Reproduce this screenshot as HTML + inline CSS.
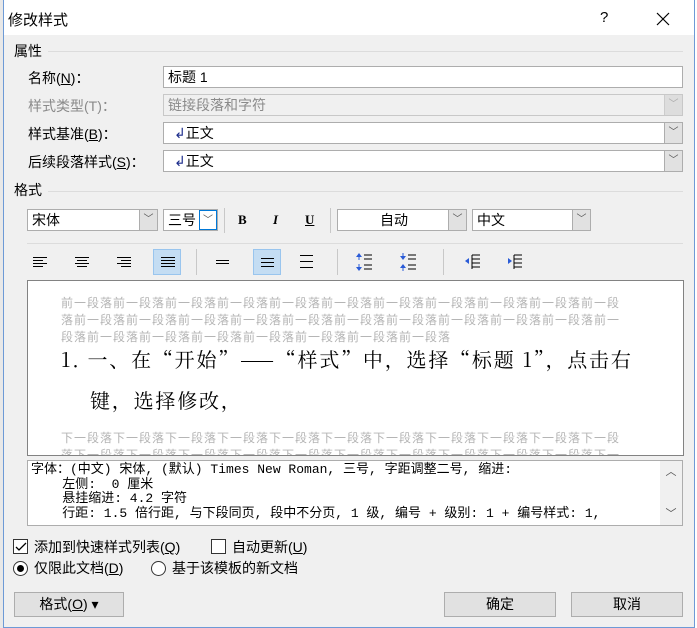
<!DOCTYPE html>
<html><head><meta charset="utf-8"><style>
*{margin:0;padding:0;box-sizing:border-box}
body{width:697px;height:628px;overflow:hidden;background:#fff;font-family:"Liberation Sans","Noto Sans CJK SC",sans-serif;font-size:13px;color:#000;position:relative}
.a{position:absolute}
.dlg{left:3px;top:0;width:692px;height:628px;background:#f0f0f0;border:1px solid #6d9ad6;border-top:none}
.tb{left:4px;top:0;width:690px;height:35px;background:#fff}
.fld{background:#fff;border:1px solid #adadad;height:22px;line-height:20px;padding-left:4px;font-size:14px}
.dd{position:absolute;right:0;top:0;width:18px;height:20px;background:#e1e1e1;border-left:1px solid #adadad;color:#555;font-size:10px;text-align:center;line-height:20px}
.lbl{font-size:14px;line-height:20px}
.gl{height:1px;background:#dcdcdc}
.ic{width:28px;height:26px;top:249px}
.hl{background:#c4ddf3;border:1px solid #99c5ee}
.ln{position:absolute;left:7px;height:1px;background:#000}
.sep{width:1px;background:#c8c8c8}
.grey{font-size:12px;color:#b4b4b4;letter-spacing:1px;line-height:17px;font-family:"Noto Sans CJK SC",sans-serif}
.btn{background:#e1e1e1;border:1px solid #adadad;height:25px;text-align:center;line-height:23px;font-size:14px}
.mono{font-family:"Liberation Mono","Noto Sans CJK SC",monospace;font-size:13px;line-height:14.5px;white-space:pre}
.hd{font-family:"Noto Serif CJK SC",serif;font-size:20px;line-height:28px;white-space:nowrap;letter-spacing:1.8px}
</style></head><body>
<div class="a" style="left:0;top:0;width:3px;height:628px;background:#e8e8e8"></div>
<div class="a dlg"></div>
<div class="a tb"></div>
<div class="a" style="left:8px;top:9px;font-size:15px">修改样式</div>
<div class="a" style="left:600px;top:9px;font-size:15px">?</div>
<svg class="a" style="left:656px;top:12px" width="14" height="14"><path d="M1 1L13 13M13 1L1 13" stroke="#000" stroke-width="1.2"/></svg>

<div class="a lbl" style="left:14px;top:41px">属性</div>
<div class="a gl" style="left:48px;top:51px;width:635px"></div>
<div class="a lbl" style="left:28px;top:68px">名称(<u>N</u>)：</div>
<div class="a fld" style="left:163px;top:66px;width:520px">标题 1</div>
<div class="a lbl" style="left:28px;top:96px;color:#8a8a8a">样式类型(T)：</div>
<div class="a fld" style="left:163px;top:94px;width:520px;background:#f0f0f0;border-color:#c8c8c8;color:#8a8a8a">链接段落和字符<div class="dd" style="background:#ddd;border-color:#ccc;color:#aaa">﹀</div></div>
<div class="a lbl" style="left:28px;top:124px">样式基准(<u>B</u>)：</div>
<div class="a fld" style="left:163px;top:122px;width:520px;padding-left:10px"><span style="color:#1a2a8a">↲</span>正文<div class="dd">﹀</div></div>
<div class="a lbl" style="left:28px;top:152px">后续段落样式(<u>S</u>)：</div>
<div class="a fld" style="left:163px;top:150px;width:520px;padding-left:10px"><span style="color:#1a2a8a">↲</span>正文<div class="dd">﹀</div></div>

<div class="a lbl" style="left:14px;top:180px">格式</div>
<div class="a gl" style="left:48px;top:191px;width:635px"></div>

<div class="a fld" style="left:27px;top:209px;width:131px">宋体<div class="dd">﹀</div></div>
<div class="a fld" style="left:163px;top:209px;width:55px">三号<div class="dd" style="background:#fff;border:1px solid #0078d7">﹀</div></div>
<div class="a sep" style="left:224px;top:208px;height:25px"></div>
<div class="a" style="left:238px;top:212px;font-family:'Liberation Serif',serif;font-weight:bold;font-size:13px">B</div>
<div class="a" style="left:273px;top:212px;font-family:'Liberation Serif',serif;font-style:italic;font-weight:bold;font-size:13px">I</div>
<div class="a" style="left:305px;top:212px;font-family:'Liberation Serif',serif;text-decoration:underline;font-weight:bold;font-size:13px">U</div>
<div class="a sep" style="left:330px;top:208px;height:25px"></div>
<div class="a fld" style="left:337px;top:209px;width:130px;text-align:center;padding-right:20px">自动<div class="dd">﹀</div></div>
<div class="a fld" style="left:472px;top:209px;width:119px">中文<div class="dd">﹀</div></div>
<div class="a gl" style="left:27px;top:243px;width:656px"></div>

<div class="a ic" style="left:26px"><div class="ln" style="top:8px;width:14px"></div><div class="ln" style="top:11px;width:10px"></div><div class="ln" style="top:14px;width:14px"></div><div class="ln" style="top:17px;width:10px"></div></div>
<div class="a ic" style="left:68px"><div class="ln" style="top:8px;width:14px"></div><div class="ln" style="top:11px;left:9px;width:10px"></div><div class="ln" style="top:14px;width:14px"></div><div class="ln" style="top:17px;left:9px;width:10px"></div></div>
<div class="a ic" style="left:110px"><div class="ln" style="top:8px;width:14px"></div><div class="ln" style="top:11px;left:11px;width:10px"></div><div class="ln" style="top:14px;width:14px"></div><div class="ln" style="top:17px;left:11px;width:10px"></div></div>
<div class="a ic hl" style="left:153px"><div class="ln" style="top:7px;width:14px"></div><div class="ln" style="top:10px;width:14px"></div><div class="ln" style="top:13px;width:14px"></div><div class="ln" style="top:16px;width:14px"></div></div>
<div class="a sep" style="left:196px;top:249px;height:26px"></div>
<div class="a ic" style="left:209px"><div class="ln" style="top:11px;width:13px"></div><div class="ln" style="top:14px;width:13px"></div></div>
<div class="a ic hl" style="left:253px"><div class="ln" style="top:8px;width:13px"></div><div class="ln" style="top:12px;width:13px"></div><div class="ln" style="top:16px;width:13px"></div></div>
<div class="a ic" style="left:293px"><div class="ln" style="top:6px;width:13px"></div><div class="ln" style="top:12px;width:13px"></div><div class="ln" style="top:18px;width:13px"></div></div>
<div class="a sep" style="left:337px;top:249px;height:26px"></div>
<svg class="a" style="left:355px;top:252px" width="18" height="20"><path d="M4 1L1 5h6z M4 19L1 15h6z" fill="#2a5bd7"/><path d="M4 5v3M4 12v3" stroke="#2a5bd7"/><path d="M9 3h8M9 7h8M9 13h8M9 17h8" stroke="#000"/></svg>
<svg class="a" style="left:399px;top:252px" width="18" height="20"><path d="M4 8L1 4h6z M4 12L1 16h6z" fill="#2a5bd7"/><path d="M4 1v3M4 16v3" stroke="#2a5bd7"/><path d="M9 3h8M9 7h8M9 13h8M9 17h8" stroke="#000"/></svg>
<div class="a sep" style="left:443px;top:249px;height:26px"></div>
<svg class="a" style="left:464px;top:253px" width="18" height="18"><path d="M1 8l4-3v6z" fill="#2a5bd7"/><path d="M8 2h8M8 6h8M8 10h8M8 14h8M8 2v14" stroke="#000"/></svg>
<svg class="a" style="left:506px;top:253px" width="18" height="18"><path d="M6 8l-4-3v6z" fill="#2a5bd7"/><path d="M8 2h8M8 6h8M8 10h8M8 14h8M8 2v14" stroke="#000"/></svg>

<div class="a" style="left:27px;top:280px;width:657px;height:176px;background:#fff;border:1px solid #828282;overflow:hidden">
<div class="a grey" style="left:33px;top:13px;width:570px">前一段落前一段落前一段落前一段落前一段落前一段落前一段落前一段落前一段落前一段落前一段落前一段落前一段落前一段落前一段落前一段落前一段落前一段落前一段落前一段落前一段落前一段落前一段落前一段落前一段落前一段落前一段落前一段落前一段落</div>
<div class="a hd" style="left:33px;top:64px">1. 一、在“开始”——“样式”中，选择“标题 1”，点击右</div>
<div class="a hd" style="left:62px;top:105px">键，选择修改，</div>
<div class="a grey" style="left:33px;top:148px;width:570px">下一段落下一段落下一段落下一段落下一段落下一段落下一段落下一段落下一段落下一段落下一段落下一段落下一段落下一段落下一段落下一段落下一段落下一段落下一段落下一段落下一段落下一段落</div>
</div>

<div class="a" style="left:27px;top:460px;width:656px;height:66px;background:#fff;border:1px solid #adadad;overflow:hidden">
<div class="a mono" style="left:3px;top:2px">字体：(中文) 宋体, (默认) Times New Roman, 三号, 字距调整二号, 缩进:
    左侧:  0 厘米
    悬挂缩进: 4.2 字符
    行距: 1.5 倍行距, 与下段同页, 段中不分页, 1 级, 编号 + 级别: 1 + 编号样式: 1,</div>
<div class="a" style="right:0;top:0;width:22px;height:64px;background:#f0f0f0;color:#555;font-size:11px;text-align:center;line-height:14px;padding-top:4px">︿<br><br><br>﹀</div>
</div>

<div class="a" style="left:13px;top:539px;width:15px;height:15px;border:1px solid #333;background:#fff"></div>
<svg class="a" style="left:15px;top:541px" width="12" height="12"><path d="M1 6l3 3 7-7" stroke="#000" fill="none" stroke-width="1.3"/></svg>
<div class="a lbl" style="left:34px;top:537px">添加到快速样式列表(<u>Q</u>)</div>
<div class="a" style="left:211px;top:539px;width:15px;height:15px;border:1px solid #333;background:#fff"></div>
<div class="a lbl" style="left:232px;top:537px">自动更新(<u>U</u>)</div>
<div class="a" style="left:13px;top:561px;width:15px;height:15px;border:1px solid #333;border-radius:50%;background:#fff"></div>
<div class="a" style="left:17px;top:565px;width:7px;height:7px;border-radius:50%;background:#000"></div>
<div class="a lbl" style="left:34px;top:558px">仅限此文档(<u>D</u>)</div>
<div class="a" style="left:151px;top:561px;width:15px;height:15px;border:1px solid #333;border-radius:50%;background:#fff"></div>
<div class="a lbl" style="left:172px;top:558px">基于该模板的新文档</div>

<div class="a btn" style="left:14px;top:592px;width:110px">格式(<u>O</u>) ▾</div>
<div class="a btn" style="left:444px;top:592px;width:112px">确定</div>
<div class="a btn" style="left:571px;top:592px;width:112px">取消</div>
</body></html>
